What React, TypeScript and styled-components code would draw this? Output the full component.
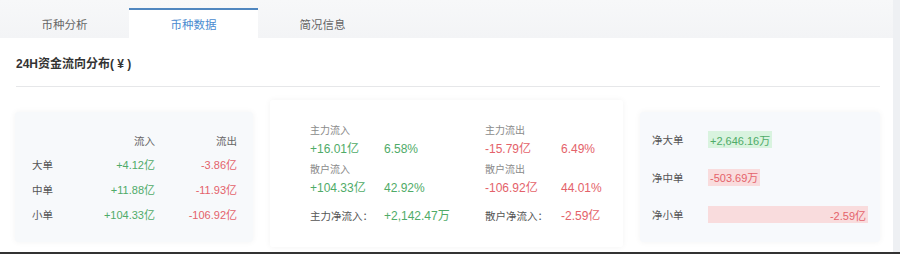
import React from "react";
import styled, { createGlobalStyle } from "styled-components";

const Global = createGlobalStyle`
  html, body { margin: 0; padding: 0; background: #eef0f3; }
  body { font-family: "Liberation Sans", "Noto Sans CJK SC", sans-serif; }
  * { box-sizing: border-box; }
`;

const GREEN = "#4fab68";
const RED = "#e4626a";

const Page = styled.div`
  width: 900px;
  height: 254px;
  display: flex;
  flex-direction: column;
  border-bottom: 2px solid #333;
  overflow: hidden;
`;

const Panel = styled.div`
  width: 893px;
  flex: 1;
  background: #fff;
  display: flex;
  flex-direction: column;
`;

const TabBar = styled.div`
  display: flex;
  height: 38px;
  padding-top: 8px;
  background: linear-gradient(#f7f8f9, #f3f4f6);
`;

const Tab = styled.div<{ $active?: boolean }>`
  width: 129px;
  height: 30px;
  display: flex;
  align-items: center;
  justify-content: center;
  font-size: 11.5px;
  color: ${(p) => (p.$active ? "#4a8bd0" : "#666")};
  background: ${(p) => (p.$active ? "#fff" : "transparent")};
  border-top: 2px solid ${(p) => (p.$active ? "#4f86bf" : "transparent")};
`;

const Header = styled.div`
  margin: 0 13px 0 16px;
  padding-top: 18px;
  padding-bottom: 14px;
  border-bottom: 1px solid #e6e7e9;
`;

const Title = styled.div`
  font-size: 12px;
  line-height: 16px;
  font-weight: bold;
  color: #333;
`;

const CardRow = styled.div`
  display: flex;
  align-items: flex-start;
  gap: 17px;
  padding: 13px 0 0 15px;
`;

const Card = styled.div<{ $w: number; $h: number; $top: number; $bg: string }>`
  width: ${(p) => p.$w}px;
  height: ${(p) => p.$h}px;
  margin-top: ${(p) => p.$top}px;
  background: ${(p) => p.$bg};
  border-radius: 3px;
  box-shadow: 0 0 6px rgba(0, 0, 0, 0.05);
`;

/* card 1 */
const FlowTable = styled.div`
  display: grid;
  grid-template-columns: 50px 73px 82px;
  grid-template-rows: 22px 25px 25px 25px;
  padding: 18px 0 0 17px;
  align-items: center;
  font-size: 11px;
`;

const Cell = styled.div<{ $tone?: "green" | "red" | "label" | "head" }>`
  line-height: 14px;
  text-align: ${(p) => (p.$tone === "label" ? "left" : "right")};
  color: ${(p) =>
    p.$tone === "green" ? GREEN : p.$tone === "red" ? RED : p.$tone === "head" ? "#666" : "#555"};
  font-size: ${(p) => (p.$tone === "label" || p.$tone === "head" ? "10.5px" : "11px")};
`;

/* card 2 */
const Summary = styled.div`
  padding: 24px 0 0 40px;
  display: flex;
  flex-direction: column;
`;

const Section = styled.div<{ $gap: number }>`
  display: grid;
  grid-template-columns: 74px 101px 76px 1fr;
  margin-top: ${(p) => p.$gap}px;
  row-gap: 2px;
`;

const SmallLabel = styled.div`
  grid-column: span 2;
  font-size: 10px;
  line-height: 14px;
  color: #8a8a8a;
`;

const BigValue = styled.div<{ $tone: "green" | "red" | "dark" }>`
  font-size: 12px;
  line-height: 18px;
  color: ${(p) => (p.$tone === "green" ? GREEN : p.$tone === "red" ? RED : "#444")};
`;

const NetLabel = styled.div`
  font-size: 10.5px;
  line-height: 18px;
  color: #555;
`;

/* card 3 */
const NetList = styled.div`
  display: flex;
  flex-direction: column;
  gap: 20.5px;
  padding: 19px 12px 0 12px;
`;

const NetRow = styled.div`
  display: flex;
  align-items: center;
  height: 17px;
`;

const NetName = styled.div`
  width: 56px;
  flex: none;
  font-size: 10.5px;
  color: #555;
`;

const Track = styled.div`
  flex: 1;
  display: flex;
`;

const Bar = styled.div<{ $tone: "green" | "red" }>`
  height: 17px;
  min-width: max-content;
  padding: 0 2px;
  display: flex;
  align-items: center;
  justify-content: flex-end;
  font-size: 11px;
  background: ${(p) => (p.$tone === "green" ? "#d9f3df" : "#f9dcdd")};
  color: ${(p) => (p.$tone === "green" ? GREEN : RED)};
`;

const flows = [
  { name: "大单", inV: "+4.12亿", outV: "-3.86亿" },
  { name: "中单", inV: "+11.88亿", outV: "-11.93亿" },
  { name: "小单", inV: "+104.33亿", outV: "-106.92亿" },
];

const nets = [
  { name: "净大单", text: "+2,646.16万", value: 2646.16 },
  { name: "净中单", text: "-503.69万", value: -503.69 },
  { name: "净小单", text: "-2.59亿", value: -25900 },
];

const maxAbs = Math.max(...nets.map((n) => Math.abs(n.value)));

export default function App() {
  return (
    <>
      <Global />
      <Page>
        <Panel>
          <TabBar>
            <Tab>币种分析</Tab>
            <Tab $active>币种数据</Tab>
            <Tab>简况信息</Tab>
          </TabBar>
          <Header>
            <Title>24H资金流向分布( ¥ )</Title>
          </Header>
          <CardRow>
            <Card $w={238} $h={130} $top={12} $bg="#f7f9fb">
              <FlowTable>
                <Cell />
                <Cell $tone="head">流入</Cell>
                <Cell $tone="head">流出</Cell>
                {flows.map((f) => (
                  <React.Fragment key={f.name}>
                    <Cell $tone="label">{f.name}</Cell>
                    <Cell $tone="green">{f.inV}</Cell>
                    <Cell $tone="red">{f.outV}</Cell>
                  </React.Fragment>
                ))}
              </FlowTable>
            </Card>
            <Card $w={353} $h={147} $top={0} $bg="#fff">
              <Summary>
                <Section $gap={0}>
                  <SmallLabel>主力流入</SmallLabel>
                  <SmallLabel>主力流出</SmallLabel>
                  <BigValue $tone="green">+16.01亿</BigValue>
                  <BigValue $tone="green">6.58%</BigValue>
                  <BigValue $tone="red">-15.79亿</BigValue>
                  <BigValue $tone="red">6.49%</BigValue>
                </Section>
                <Section $gap={5}>
                  <SmallLabel>散户流入</SmallLabel>
                  <SmallLabel>散户流出</SmallLabel>
                  <BigValue $tone="green">+104.33亿</BigValue>
                  <BigValue $tone="green">42.92%</BigValue>
                  <BigValue $tone="red">-106.92亿</BigValue>
                  <BigValue $tone="red">44.01%</BigValue>
                </Section>
                <Section $gap={10}>
                  <NetLabel>主力净流入：</NetLabel>
                  <BigValue $tone="green">+2,142.47万</BigValue>
                  <NetLabel>散户净流入：</NetLabel>
                  <BigValue $tone="red">-2.59亿</BigValue>
                </Section>
              </Summary>
            </Card>
            <Card $w={240} $h={130} $top={12} $bg="#f7f9fc">
              <NetList>
                {nets.map((n) => (
                  <NetRow key={n.name}>
                    <NetName>{n.name}</NetName>
                    <Track>
                      <Bar
                        $tone={n.value >= 0 ? "green" : "red"}
                        style={{ width: `${(Math.abs(n.value) / maxAbs) * 100}%` }}
                      >
                        {n.text}
                      </Bar>
                    </Track>
                  </NetRow>
                ))}
              </NetList>
            </Card>
          </CardRow>
        </Panel>
      </Page>
    </>
  );
}
